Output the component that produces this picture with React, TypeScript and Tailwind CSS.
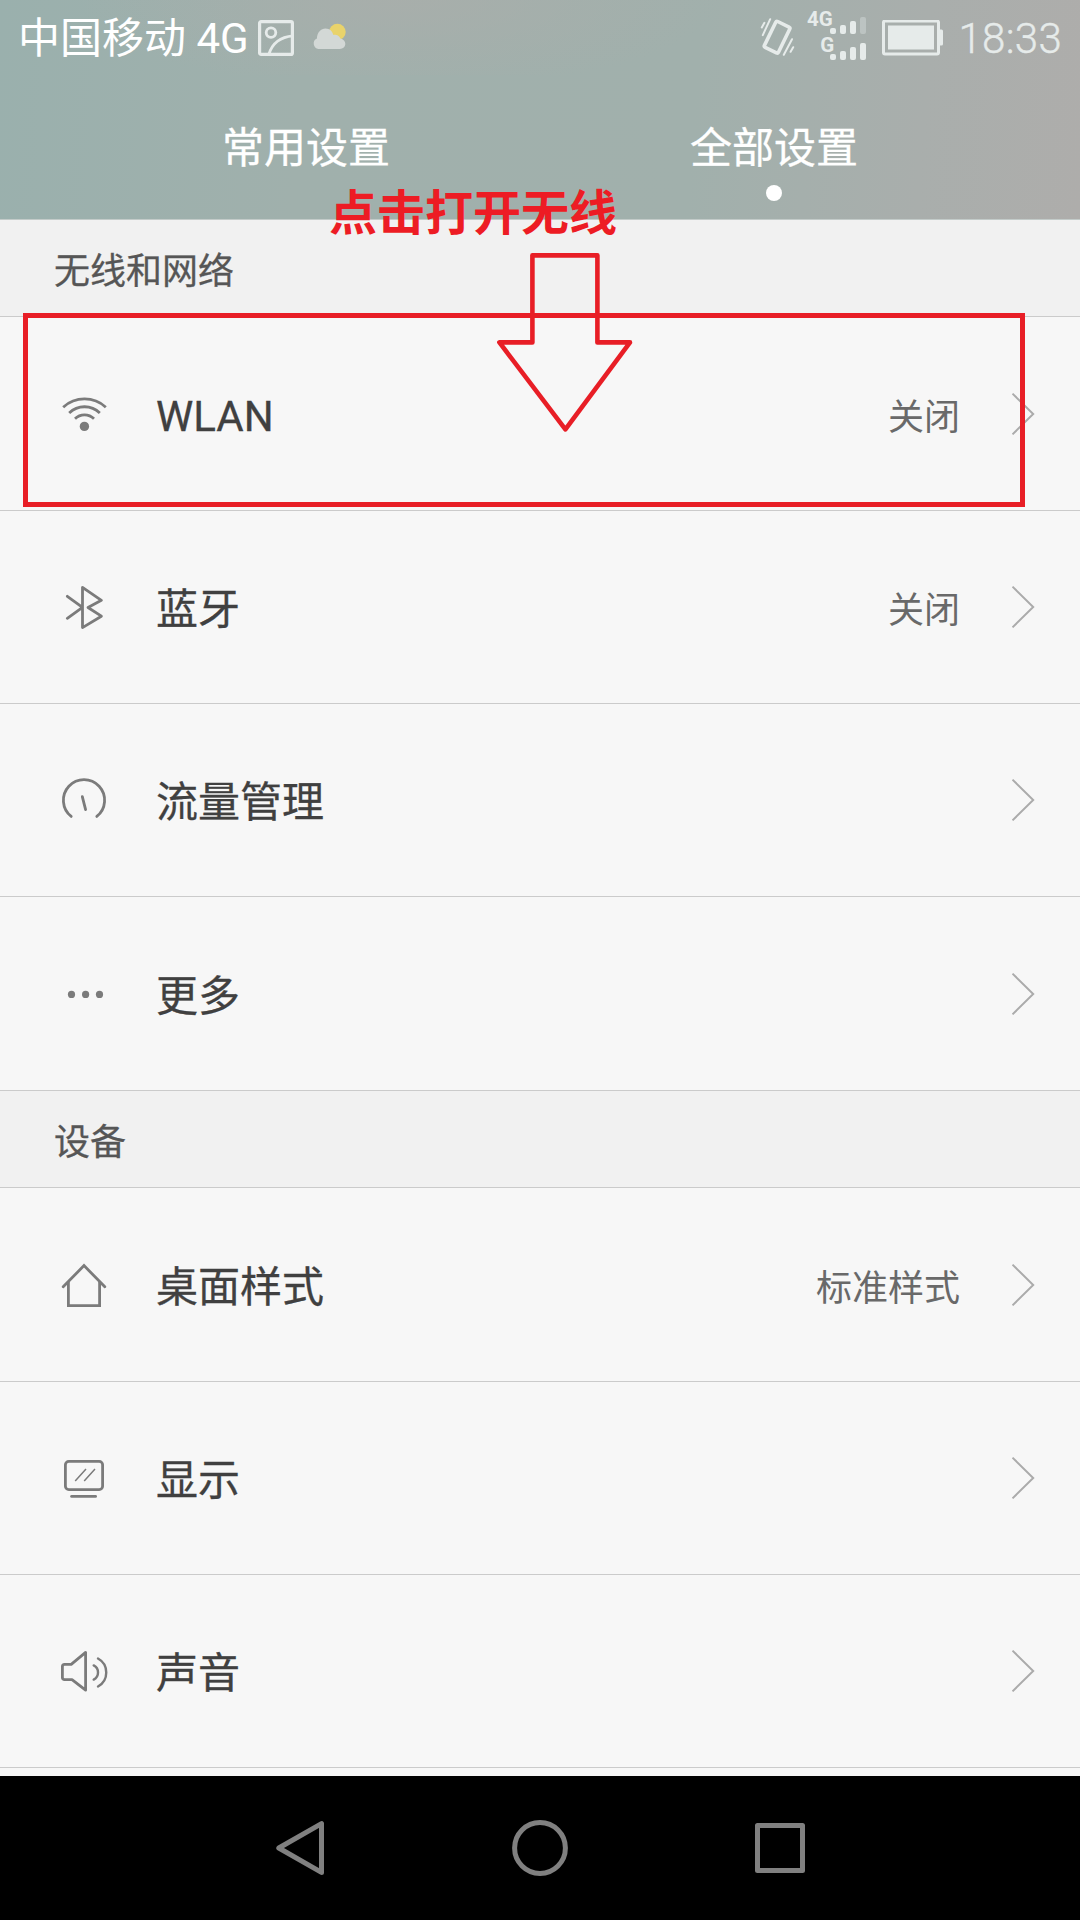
import type { ReactNode } from 'react'

type Item = {
  label: string
  icon: ReactNode
  value?: string
  height: string
}

function Icon({ children }: { children: ReactNode }) {
  return (
    <svg className="ml-[60px] h-12 w-12 shrink-0" viewBox="0 0 48 48" fill="none" stroke="#7b7b7b" strokeWidth="2.8" aria-hidden="true">
      {children}
    </svg>
  )
}

const network: Item[] = [
  {
    label: 'WLAN',
    value: '关闭',
    height: 'h-[194px]',
    icon: (
      <Icon>
        <path d="M3.2 17.2a31.6 31.6 0 0 1 42.6 0M9.2 23a21.8 21.8 0 0 1 30.6 0M15 28.8a13.5 13.5 0 0 1 19 0" />
        <circle cx="24.4" cy="36.4" r="4.7" fill="#7b7b7b" stroke="none" />
      </Icon>
    ),
  },
  {
    label: '蓝牙',
    value: '关闭',
    height: 'h-[193px]',
    icon: (
      <Icon>
        <path d="M7.3 13.3l15.2 11-15.2 11M22.5 4.4v40.2l18.9-11.4-13.4-8.7 13.4-7.2z" strokeLinecap="round" strokeLinejoin="round" />
      </Icon>
    ),
  },
  {
    label: '流量管理',
    height: 'h-[193px]',
    icon: (
      <Icon>
        <path d="M11.2 40.4a20.6 20.6 0 1 1 25.6 0M22.3 20.6l3.3 13" strokeLinecap="round" />
      </Icon>
    ),
  },
  {
    label: '更多',
    height: 'h-[194px]',
    icon: (
      <Icon>
        <g fill="#7b7b7b" stroke="none">
          <circle cx="11.5" cy="24.4" r="3.6" />
          <circle cx="25.6" cy="24.4" r="3.6" />
          <circle cx="39.5" cy="24.4" r="3.6" />
        </g>
      </Icon>
    ),
  },
]

const device: Item[] = [
  {
    label: '桌面样式',
    value: '标准样式',
    height: 'h-[194px]',
    icon: (
      <Icon>
        <path d="M3.2 25.8L24 4.6l20.8 21.2" strokeLinecap="round" />
        <path d="M8.4 21v23.7h31.2V21" />
      </Icon>
    ),
  },
  {
    label: '显示',
    height: 'h-[193px]',
    icon: (
      <Icon>
        <rect x="5.4" y="7.4" width="37.2" height="28.2" rx="3.4" />
        <path d="M11.6 42.4h24" strokeLinecap="round" />
        <path d="M15.2 27l10.8-12M24.2 27L35 15" strokeWidth="1.5" />
      </Icon>
    ),
  },
  {
    label: '声音',
    height: 'h-[193px]',
    icon: (
      <Icon>
        <path d="M4.6 17.4h6.6L25.6 5.4v37.8L12 32.6H4.6q-2.2 0-2.2-2.2V19.6q0-2.2 2.2-2.2z" strokeLinejoin="round" />
        <path d="M33.7 18.4a8 8 0 0 1 0 14.2M38 11.5a16 16 0 0 1 0 28" strokeWidth="2.4" strokeLinecap="round" />
      </Icon>
    ),
  },
]

function Section({ title, items }: { title: string; items: Item[] }) {
  return (
    <section>
      <h2 className="flex h-[97px] items-center border-b border-[#cbcbcb] bg-[#f1f1f1] pl-[54px] pt-2 text-4xl text-[#565656] [-webkit-text-stroke:0.3px]">{title}</h2>
      <ul>
        {items.map((item) => (
          <li key={item.label} className={`flex flex-col justify-end border-b border-[#cbcbcb] ${item.height}`}>
            <div className="flex h-48 items-center">
              {item.icon}
              <span className="ml-12 grow pt-[5px] text-[42px] leading-[60px] text-[#404040] [-webkit-text-stroke:0.3px]">{item.label}</span>
              {item.value && <span className="pt-[7px] text-4xl text-[#696969]">{item.value}</span>}
              <svg className="ml-12 mr-10 h-12 w-8 shrink-0" viewBox="0 0 32 48" fill="none" stroke="#ababab" strokeWidth="2" aria-hidden="true">
                <path d="M4.5 3.6L25.2 24 4.5 44.4" />
              </svg>
            </div>
          </li>
        ))}
      </ul>
    </section>
  )
}

function StatusBar() {
  return (
    <div className="flex h-[75px] items-center bg-[radial-gradient(ellipse_320px_90px_at_400px_0,#adadaa99,transparent)] pl-[18px] pr-[18px]">
      <span className="whitespace-pre pt-[3px] text-[42px] leading-none text-white">中国移动 4G</span>

      {/* Screenshot saved */}
      <svg className="ml-[9px] h-9 w-9" viewBox="0 0 36 36" fill="none" stroke="#e6ebea" strokeWidth="2.8" aria-hidden="true">
        <rect x="1.6" y="1.6" width="32.8" height="32.8" rx="1.5" strokeWidth="3.2" />
        <circle cx="13" cy="12.6" r="4.8" />
        <path d="M11 34q5-16.5 24-18.2" />
      </svg>

      {/* Weather */}
      <svg className="ml-[18px] h-9 w-9" viewBox="0 0 36 36" aria-hidden="true">
        <circle cx="25.4" cy="12" r="8.3" fill="#e9d36b" />
        <path d="M6.5 29a5.6 5.6 0 0 1-1.6-10.6C5.2 12.5 9 8.6 13.5 8.6c4.3 0 6.9 2.800 7.9 6.5 1.2-.6 2.8-.5 4 .1 1.6.9 2.600 2 2.900 3.400 3.2.7 5 2.7 5 5.2 0 3-2.200 5.200-5.500 5.200z" fill="#d3d8d6" />
      </svg>

      {/* Vibrate */}
      <svg className="ml-auto h-[46px] w-11" viewBox="0 0 44 46" fill="none" stroke="#e6ebea" strokeWidth="2" strokeLinecap="round" aria-hidden="true">
        <rect x="12.3" y="7.8" width="15.6" height="28.8" rx="1.5" strokeWidth="3.6" transform="rotate(26 20.1 22.200)" />
        <path d="M13.2 4.2L5.8 20.2M7.4 7.8L4.8 12.4M35 24.2l-8.2 15.6M36.2 32.200l-2.6 4.6" />
      </svg>

      {/* Signal, one row per SIM */}
      <svg className="ml-[6px] h-[60px] w-[60px]" viewBox="0 1 60 60" fill="#e6ebea" aria-hidden="true">
        <text x="0" y="19" className="font-['Roboto'] text-[20.5px] font-bold">4G</text>
        <text x="13.3" y="45.3" className="font-['Roboto'] text-[20.5px] font-bold">G</text>
        <rect x="23" y="21" width="6" height="6" rx="2" />
        <rect x="33" y="18" width="6" height="9" rx="2" />
        <rect x="43" y="14" width="6" height="13" rx="2" />
        <rect x="53" y="10" width="6" height="17" rx="2" fillOpacity=".35" />
        <rect x="23" y="47" width="6" height="6" rx="2" />
        <rect x="33" y="44" width="6" height="9" rx="2" />
        <rect x="43" y="40" width="6" height="13" rx="2" />
        <rect x="53" y="36" width="6" height="17" rx="2" />
      </svg>

      {/* Battery */}
      <svg className="ml-[15px] h-9 w-[61px]" viewBox="0 0.5 61 36" fill="#e6ebea" aria-hidden="true">
        <rect x="1.5" y="1.5" width="55" height="33" rx="1.5" fill="none" stroke="#e6ebea" strokeWidth="3" />
        <rect x="6" y="6" width="46" height="24" />
        <path d="M58 10h1.5q1.5 0 1.5 1.5v13q0 1.5-1.5 1.5H58z" />
      </svg>

      <span className="ml-[15px] pt-[3px] text-[42px] font-light leading-none tracking-[0.3px] text-[#e6ebea] [-webkit-text-stroke:0.4px]">18:33</span>
    </div>
  )
}

export default function App() {
  return (
    <div className="relative flex h-[1920px] w-[1080px] flex-col overflow-hidden bg-[#f7f7f7] font-['Roboto','Noto_Sans_CJK_SC',sans-serif]">
      <header className="h-[220px] border-b border-[#c3cbc9] bg-[linear-gradient(94deg,#9ab0ad_0%,#a0b0ac_28%,#a1b0ac_64%,#a9aeac_85%,#aeadab_100%)]">
        <StatusBar />
        <nav className="flex px-[72px] text-[42px] leading-none text-white [-webkit-text-stroke:0.3px]">
          <a className="flex flex-1 flex-col items-center pt-[53px]" href="#0">
            常用设置
          </a>
          <a className="flex flex-1 flex-col items-center pt-[53px]" href="#0">
            全部设置
            <span className="mt-[15px] h-4 w-4 rounded-full bg-white"></span>
          </a>
        </nav>
      </header>

      <main className="grow">
        <Section title="无线和网络" items={network} />
        <Section title="设备" items={device} />
      </main>

      {/* Navigation keys */}
      <footer className="flex h-36 shrink-0 items-center justify-center gap-[180px] bg-black">
        <svg className="h-[60px] w-[60px]" viewBox="0 0 60 60" fill="none" stroke="#808080" strokeWidth="5" strokeLinejoin="round" aria-hidden="true">
          <path d="M8.8 30L51.5 5.600v48.800z" />
        </svg>
        <svg className="h-[60px] w-[60px]" viewBox="0 0 60 60" fill="none" stroke="#808080" strokeWidth="5" aria-hidden="true">
          <circle cx="30" cy="30" r="25.4" />
        </svg>
        <svg className="h-[60px] w-[60px]" viewBox="0 0 60 60" fill="none" stroke="#808080" strokeWidth="5" strokeLinejoin="round" aria-hidden="true">
          <path d="M7.5 7.5h45v45h-45z" />
        </svg>
      </footer>

      {/* Hint drawn over the list */}
      <p className="absolute left-[329px] top-[190px] text-[48px] font-bold leading-none text-[#ed1c24]">点击打开无线</p>
      <div className="absolute left-[23px] top-[313px] h-[194px] w-[1002px] border-[5px] border-[#e81e26]"></div>
      <svg className="absolute left-[495px] top-[250px] h-[185px] w-[140px]" viewBox="0 0 140 185" fill="none" stroke="#e81e26" strokeWidth="4.6" strokeLinejoin="round" aria-hidden="true">
        <path d="M37.4 5.4h65v87H135l-64.6 87L4.4 92.4h33z" />
      </svg>
    </div>
  )
}
